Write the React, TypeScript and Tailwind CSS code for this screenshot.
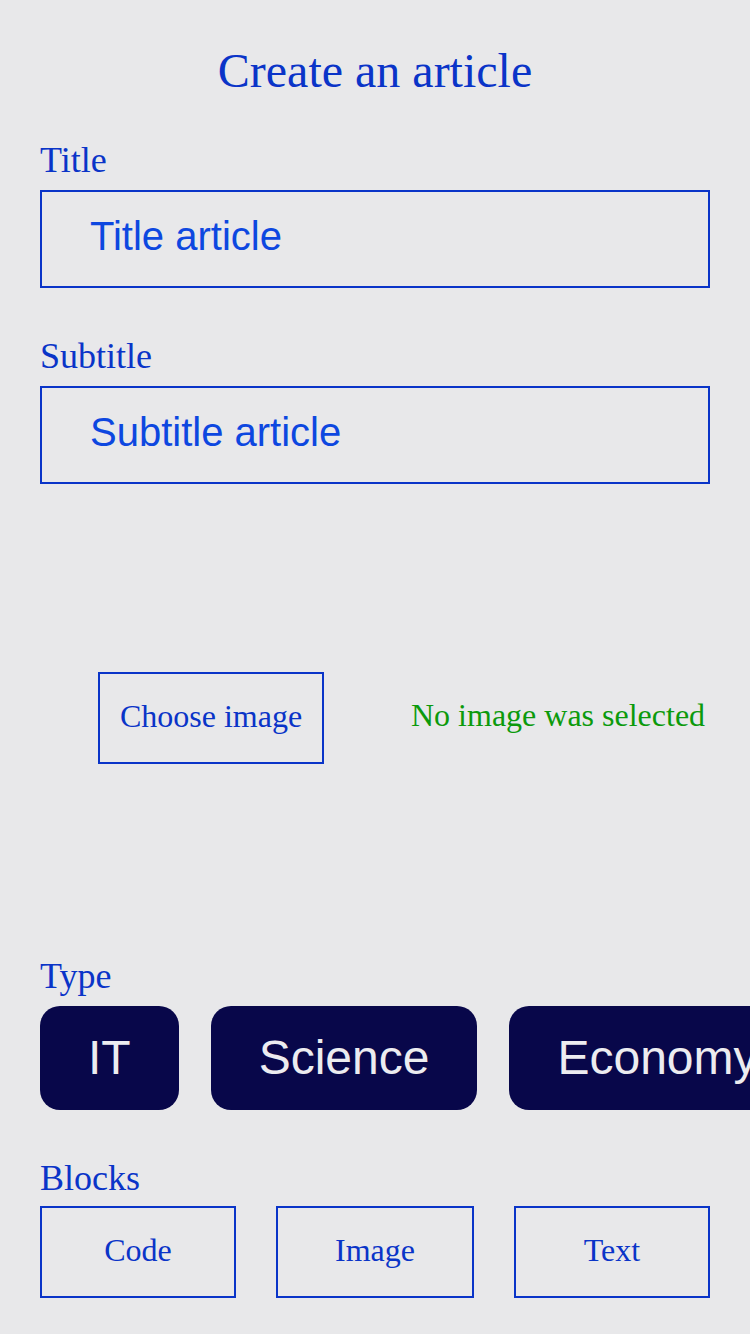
import React from "react";

const serif = "font-['Liberation_Serif','Times_New_Roman',serif]";
const sans = "font-['Liberation_Sans',Arial,sans-serif]";

function Label({ children, mb = "mb-[10px]" }: { children: React.ReactNode; mb?: string }) {
  return (
    <div className={`${serif} text-[36px] leading-[40px] text-[#0a34c8] ${mb}`}>{children}</div>
  );
}

function Field({ text }: { text: string }) {
  return (
    <div
      className={`h-[98px] border-2 border-[#0a34c8] pl-[48px] pb-[6px] flex items-center ${sans} text-[40px] text-[#0d47e0]`}
    >
      {text}
    </div>
  );
}

export default function App() {
  const types = ["IT", "Science", "Economy"];
  const blocks = ["Code", "Image", "Text"];
  return (
    <div className="w-[750px] min-h-[1334px] bg-[#e8e8ea] overflow-hidden">
      <div className="pt-[43px] px-[40px]">
        <h1 className={`${serif} text-[48px] leading-[56px] text-center text-[#0a34c8]`}>
          Create an article
        </h1>
        <div className="mt-[41px]">
          <Label>Title</Label>
          <Field text="Title article" />
        </div>
        <div className="mt-[48px]">
          <Label>Subtitle</Label>
          <Field text="Subtitle article" />
        </div>
      </div>

      <div className="mt-[188px] flex items-center pl-[98px]">
        <button
          className={`w-[226px] h-[92px] border-2 border-[#0a34c8] ${serif} text-[32px] text-[#0a34c8] flex items-center justify-center pb-[4px]`}
        >
          Choose image
        </button>
        <div className={`ml-[87px] pb-[6px] ${serif} text-[32px] text-[#0c9a0c] whitespace-nowrap`}>
          No image was selected
        </div>
      </div>

      <div className="mt-[192px] pl-[40px]">
        <Label>Type</Label>
        <div className="flex gap-[32px]">
          {types.map((t) => (
            <div
              key={t}
              className={`shrink-0 h-[104px] px-[48px] rounded-[20px] bg-[#08074a] flex items-center ${sans} text-[48px] text-[#ececf0]`}
            >
              {t}
            </div>
          ))}
        </div>
      </div>

      <div className="mt-[48px] px-[40px]">
        <Label mb="mb-[8px]">Blocks</Label>
        <div className="flex justify-between">
          {blocks.map((b, i) => (
            <div
              key={b}
              className={`${i === 1 ? "w-[198px]" : "w-[196px]"} h-[92px] border-2 border-[#0a34c8] flex items-center justify-center ${serif} text-[32px] text-[#0a34c8] pb-[4px]`}
            >
              {b}
            </div>
          ))}
        </div>
      </div>
    </div>
  );
}
